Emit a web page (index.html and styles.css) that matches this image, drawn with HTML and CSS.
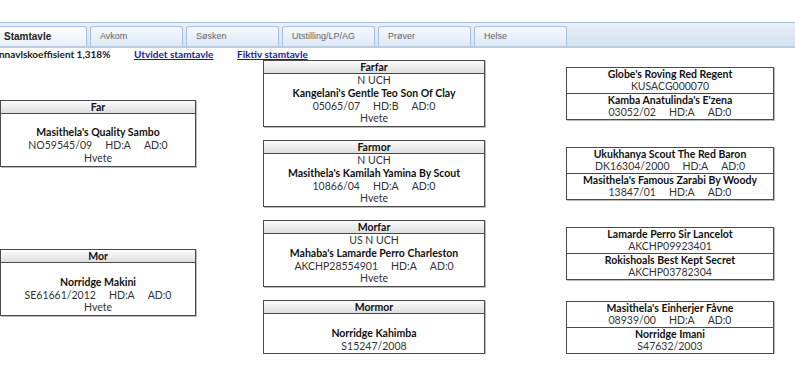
FILE: index.html
```html
<!DOCTYPE html>
<html lang="no">
<head>
    <meta charset="UTF-8">
    <title>Stamtavle</title>
    <link rel="stylesheet" href="styles.css">
</head>
<body>
    <div class="tabstrip">
        <div class="tab active">Stamtavle</div>
        <div class="tab">Avkom</div>
        <div class="tab">Søsken</div>
        <div class="tab">Utstilling/LP/AG</div>
        <div class="tab">Prøver</div>
        <div class="tab">Helse</div>
    </div>

    <div class="info">
        <span class="coi">Innavlskoeffisient 1,318%</span>
        <a href="#" class="link-wide">Utvidet stamtavle</a>
        <a href="#">Fiktiv stamtavle</a>
    </div>

    <div class="pedigree">
        <!-- parents -->
        <div class="dog parent far">
            <div class="dog-head">Far</div>
            <div class="dog-body">
                <div class="line">&nbsp;</div>
                <div class="line name">Masithela's Quality Sambo</div>
                <div class="line">NO59545/09<span class="gap">HD:A</span><span class="gap">AD:0</span></div>
                <div class="line">Hvete</div>
            </div>
        </div>
        <div class="dog parent mor">
            <div class="dog-head">Mor</div>
            <div class="dog-body">
                <div class="line">&nbsp;</div>
                <div class="line name">Norridge Makini</div>
                <div class="line">SE61661/2012<span class="gap">HD:A</span><span class="gap">AD:0</span></div>
                <div class="line">Hvete</div>
            </div>
        </div>

        <!-- grandparents -->
        <div class="dog grand r1">
            <div class="dog-head">Farfar</div>
            <div class="dog-body">
                <div class="line">N UCH</div>
                <div class="line name">Kangelani's Gentle Teo Son Of Clay</div>
                <div class="line">05065/07<span class="gap">HD:B</span><span class="gap">AD:0</span></div>
                <div class="line">Hvete</div>
            </div>
        </div>
        <div class="dog grand r2">
            <div class="dog-head">Farmor</div>
            <div class="dog-body">
                <div class="line">N UCH</div>
                <div class="line name">Masithela's Kamilah Yamina By Scout</div>
                <div class="line">10866/04<span class="gap">HD:A</span><span class="gap">AD:0</span></div>
                <div class="line">Hvete</div>
            </div>
        </div>
        <div class="dog grand r3">
            <div class="dog-head">Morfar</div>
            <div class="dog-body">
                <div class="line">US N UCH</div>
                <div class="line name">Mahaba's Lamarde Perro Charleston</div>
                <div class="line">AKCHP28554901<span class="gap">HD:A</span><span class="gap">AD:0</span></div>
                <div class="line">Hvete</div>
            </div>
        </div>
        <div class="dog grand r4">
            <div class="dog-head">Mormor</div>
            <div class="dog-body">
                <div class="line">&nbsp;</div>
                <div class="line name">Norridge Kahimba</div>
                <div class="line">S15247/2008</div>
            </div>
        </div>

        <!-- great grandparents -->
        <div class="dog great r1">
            <div class="half">
                <div class="line name">Globe's Roving Red Regent</div>
                <div class="line">KUSACG000070</div>
            </div>
            <div class="half">
                <div class="line name">Kamba Anatulinda's E'zena</div>
                <div class="line">03052/02<span class="gap">HD:A</span><span class="gap">AD:0</span></div>
            </div>
        </div>
        <div class="dog great r2">
            <div class="half">
                <div class="line name">Ukukhanya Scout The Red Baron</div>
                <div class="line">DK16304/2000<span class="gap">HD:A</span><span class="gap">AD:0</span></div>
            </div>
            <div class="half">
                <div class="line name">Masithela's Famous Zarabi By Woody</div>
                <div class="line">13847/01<span class="gap">HD:A</span><span class="gap">AD:0</span></div>
            </div>
        </div>
        <div class="dog great r3">
            <div class="half">
                <div class="line name">Lamarde Perro Sir Lancelot</div>
                <div class="line">AKCHP09923401</div>
            </div>
            <div class="half">
                <div class="line name">Rokishoals Best Kept Secret</div>
                <div class="line">AKCHP03782304</div>
            </div>
        </div>
        <div class="dog great r4">
            <div class="half">
                <div class="line name">Masithela's Einherjer Fåvne</div>
                <div class="line">08939/00<span class="gap">HD:A</span><span class="gap">AD:0</span></div>
            </div>
            <div class="half">
                <div class="line name">Norridge Imani</div>
                <div class="line">S47632/2003</div>
            </div>
        </div>
    </div>
</body>
</html>
```

FILE: styles.css
```css
body {
    margin: 0;
    background-color: #fff;
    font-family: Lato, "Open Sans", Arial, sans-serif;
    font-size: 10.5px;
    color: #222;
    overflow: hidden;
}
.tabstrip {
    display: flex;
    gap: 3px;
    margin-top: 22px;
    height: 20px;
    padding: 3px 0 0 0;
    margin-left: -6px;
    background: linear-gradient(#e8eff8, #d5e2f2);
    border-top: 1px solid #a9c0dc;
    border-bottom: 2px solid #b9cde6;
    font-family: "Liberation Sans", Tahoma, sans-serif;
    font-size: 9px;
}
.tab {
    width: 82px;
    padding-left: 9px;
    line-height: 19px;
    color: #666;
    background: linear-gradient(#f5f9fd, #dde8f6);
    border: 1px solid #a9c0dc;
    border-bottom: none;
    border-radius: 3px 3px 0 0;
}
.tab.active {
    font-weight: bold;
    font-size: 10px;
    color: #222;
    background: linear-gradient(#ffffff, #e9f0fa);
}
.info {
    display: flex;
    height: 12px;
    margin-left: -4px;
    font-size: 10px;
    font-weight: bold;
    line-height: 12px;
}
.info .coi {
    width: 138px;
}
.info a {
    color: #1c1c99;
}
.info .link-wide {
    width: 103px;
}
.pedigree {
    display: grid;
    grid-template-columns: 196px 222px 222px;
    grid-template-rows: 66px 66px 66px auto;
    column-gap: 67px;
    row-gap: 14px;
}
.dog {
    border: 1px solid #4a4a4a;
    text-align: center;
    box-shadow: 1px 1px 0 #bbb;
}
.dog-head {
    height: 12px;
    line-height: 12px;
    font-weight: bold;
    color: #111;
    background: linear-gradient(#fdfdfd, #dedede);
    border-bottom: 1px solid #4a4a4a;
}
.dog-body {
    padding: 0 0 1px 0;
}
.line {
    line-height: 12.75px;
    color: #333;
    white-space: nowrap;
}
.line.name {
    font-weight: bold;
    color: #111;
}
.gap {
    margin-left: 13px;
}
.parent {
    grid-column: 1;
    align-self: center;
}
.far {
    grid-row: 1 / 3;
}
.mor {
    grid-row: 3 / 5;
    margin-bottom: 9px;
}
.grand {
    grid-column: 2;
    align-self: start;
}
.great {
    grid-column: 3;
    align-self: center;
    margin-left: 14px;
}
.half {
    height: 25px;
}
.half + .half {
    border-top: 1px solid #4a4a4a;
}
.r1 { grid-row: 1; }
.r2 { grid-row: 2; }
.r3 { grid-row: 3; }
.r4 { grid-row: 4; }
```
